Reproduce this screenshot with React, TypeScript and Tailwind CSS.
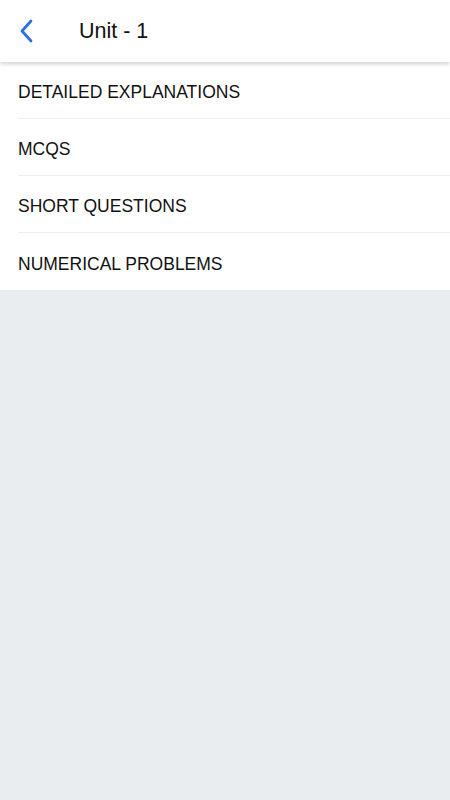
const items = ['DETAILED EXPLANATIONS', 'MCQS', 'SHORT QUESTIONS', 'NUMERICAL PROBLEMS']

export default function App() {
  return (
    <div className="min-h-screen bg-[#e9edf0]" style={{ fontFamily: '"Liberation Sans", Arial, sans-serif' }}>
      {/* Header */}
      <div className="relative z-10 h-[62px] bg-white flex items-center shadow-[0_2px_4px_rgba(0,0,0,0.18)]">
        <button className="w-[50px] h-full flex items-center justify-center pl-[1px]">
          <svg width="14" height="24" viewBox="0 0 14 24" fill="none">
            <polyline points="12,2 3,12 12,22" stroke="#2f6fe4" strokeWidth="2.8" strokeLinecap="round" strokeLinejoin="round" />
          </svg>
        </button>
        <h1 className="ml-[29px] text-[21.5px] text-[#111]">Unit - 1</h1>
      </div>

      {/* List */}
      <div className="bg-white pl-[18px]">
        {items.map((t, i) => (
          <div key={t}
            className={`h-[57px] pt-[5px] flex items-center text-[17.5px] text-[#111] ${i < items.length - 1 ? 'border-b border-[#eeeeee]' : ''}`}>
            {t}
          </div>
        ))}
      </div>
    </div>
  )
}
